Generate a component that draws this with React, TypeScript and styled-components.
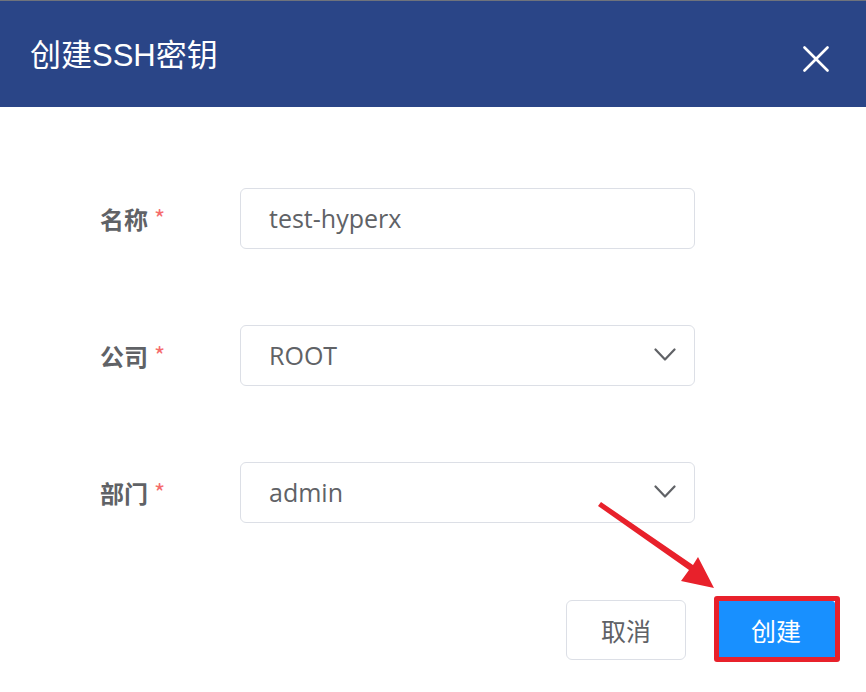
import React from "react";
import styled, { createGlobalStyle } from "styled-components";

const Global = createGlobalStyle`
  html, body { margin: 0; padding: 0; background: #ffffff; }
  body { font-family: "Open Sans", "Noto Sans CJK SC", sans-serif; }
  * { box-sizing: border-box; }
`;

const Dialog = styled.div`
  position: relative;
  width: 866px;
  height: 692px;
  background: #ffffff;
  display: flex;
  flex-direction: column;
`;

const Header = styled.header`
  height: 107px;
  background: #2a4587;
  border-top: 1px solid #6f737c;
  display: flex;
  align-items: center;
  justify-content: space-between;
  padding: 0 32px 0 30px;
`;

const Title = styled.h1`
  margin: 0;
  color: #ffffff;
  font-family: "Liberation Sans", "Noto Sans CJK SC", sans-serif;
  font-weight: 400;
  font-size: 31px;
  margin-top: -4px;
`;

const CloseButton = styled.button`
  border: none;
  background: transparent;
  padding: 0;
  width: 36px;
  height: 36px;
  display: flex;
  align-items: center;
  justify-content: center;
  cursor: pointer;
  margin-top: 10px;
`;

const Body = styled.div`
  padding: 81px 0 0 100px;
  display: flex;
  flex-direction: column;
  gap: 77px;
`;

const Row = styled.div`
  display: flex;
  align-items: center;
  height: 60px;
`;

const Label = styled.label`
  width: 140px;
  font-family: "Noto Sans CJK SC", sans-serif;
  font-weight: 700;
  font-size: 24px;
  color: #606266;
  display: flex;
  align-items: center;
`;

const Required = styled.span`
  color: #f56c6c;
  font-weight: 400;
  font-size: 24px;
  margin-left: 6px;
  margin-top: -2px;
`;

const Field = styled.div`
  width: 455px;
  height: 61px;
  border: 1.5px solid #dcdfe6;
  border-radius: 6px;
  display: flex;
  align-items: center;
  justify-content: space-between;
  padding: 0 18px 0 28px;
  font-family: "Open Sans", "Noto Sans CJK SC", sans-serif;
  font-size: 25px;
  color: #606266;
`;

const Chevron = styled.svg`
  display: block;
  flex: none;
`;

const Footer = styled.div`
  display: flex;
  justify-content: flex-end;
  gap: 30px;
  padding: 78px 30px 0 0;
`;

const Button = styled.button<{ $primary?: boolean }>`
  position: relative;
  width: 120px;
  height: 60px;
  border-radius: 6px;
  border: 1.5px solid ${(p) => (p.$primary ? "#1890ff" : "#dcdfe6")};
  background: ${(p) => (p.$primary ? "#1890ff" : "#ffffff")};
  color: ${(p) => (p.$primary ? "#ffffff" : "#606266")};
  font-family: "Noto Sans CJK SC", sans-serif;
  font-size: 25px;
  padding: 0;
  cursor: pointer;
`;

const Highlight = styled.span`
  position: absolute;
  left: -3px;
  top: -5px;
  right: -5px;
  bottom: -3px;
  border: 5px solid #e8212b;
  border-radius: 3px;
  pointer-events: none;
`;

const ArrowLayer = styled.svg`
  position: absolute;
  left: 0;
  top: 0;
  pointer-events: none;
`;

const ChevronIcon = () => (
  <Chevron width="22" height="14" viewBox="0 0 22 14">
    <path d="M1.5 1.5 L11 11.5 L20.5 1.5" fill="none" stroke="#606266" strokeWidth="2.2" strokeLinecap="round" strokeLinejoin="round" />
  </Chevron>
);

export default function App() {
  return (
    <>
      <Global />
      <Dialog>
        <Header>
          <Title>创建SSH密钥</Title>
          <CloseButton aria-label="close">
            <svg width="26" height="26" viewBox="0 0 26 26">
              <path d="M1.5 1.5 L24.5 24.5 M24.5 1.5 L1.5 24.5" stroke="#ffffff" strokeWidth="2.6" strokeLinecap="round" />
            </svg>
          </CloseButton>
        </Header>
        <Body>
          <Row>
            <Label>
              名称<Required>*</Required>
            </Label>
            <Field>test-hyperx</Field>
          </Row>
          <Row>
            <Label>
              公司<Required>*</Required>
            </Label>
            <Field>
              ROOT
              <ChevronIcon />
            </Field>
          </Row>
          <Row>
            <Label>
              部门<Required>*</Required>
            </Label>
            <Field>
              admin
              <ChevronIcon />
            </Field>
          </Row>
        </Body>
        <Footer>
          <Button>取消</Button>
          <Button $primary>
            创建
            <Highlight />
          </Button>
        </Footer>
        <ArrowLayer width="866" height="692" viewBox="0 0 866 692">
          <polygon
            points="598,506 601,502 693,565 698,557 714,588 681,581 689,570"
            fill="#e8212b"
          />
        </ArrowLayer>
      </Dialog>
    </>
  );
}
